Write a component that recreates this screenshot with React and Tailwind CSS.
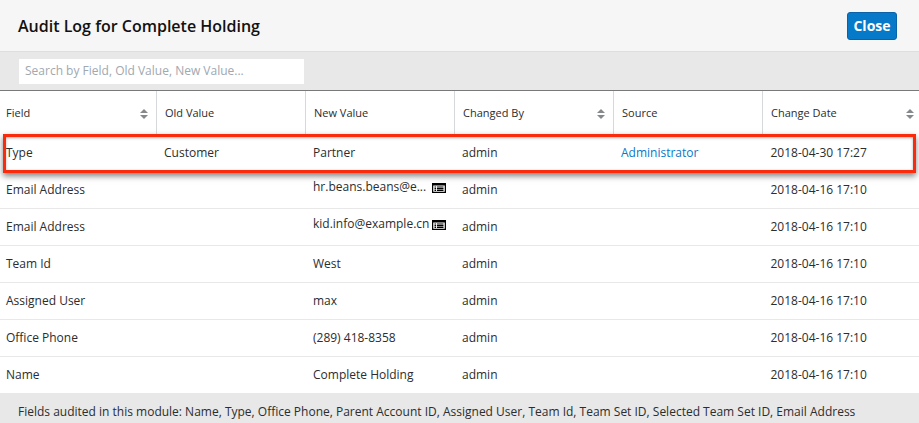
import React from "react";

const columns = [
  { label: "Field", sort: true },
  { label: "Old Value" },
  { label: "New Value" },
  { label: "Changed By", sort: true },
  { label: "Source" },
  { label: "Change Date", sort: true },
];

const rows = [
  ["Type", "Customer", "Partner", "admin", "Administrator", "2018-04-30 17:27"],
  ["Email Address", "", "hr.beans.beans@e...", "admin", "", "2018-04-16 17:10", true],
  ["Email Address", "", "kid.info@example.cn", "admin", "", "2018-04-16 17:10", true],
  ["Team Id", "", "West", "admin", "", "2018-04-16 17:10"],
  ["Assigned User", "", "max", "admin", "", "2018-04-16 17:10"],
  ["Office Phone", "", "(289) 418-8358", "admin", "", "2018-04-16 17:10"],
  ["Name", "", "Complete Holding", "admin", "", "2018-04-16 17:10"],
];

const grid = "grid grid-cols-[157px_149px_149px_159px_149px_156px]";

const SortIcon = () => (
  <svg width="8" height="10" viewBox="0 0 8 10" className="shrink-0 fill-[#85898c]">
    <path d="M4 0 8 4H0Z" />
    <path d="M0 6h8L4 10Z" />
  </svg>
);

const ListIcon = () => (
  <svg width="14" height="10" viewBox="0 0 14 10" className="mt-[1px] shrink-0">
    <rect x="0" y="0" width="14" height="10" fill="#000" />
    <rect x="1.25" y="2.5" width="11.5" height="6.25" fill="#fff" />
    <path d="M2.5 3.4h1.6v1.1H2.5zM5 3.4h6.5v1.1H5zM2.5 5.1h1.6v1.1H2.5zM5 5.1h6.5v1.1H5zM2.5 6.8h1.6v1.1H2.5zM5 6.8h6.5v1.1H5z" fill="#000" />
  </svg>
);

const App = () => {
  return (
    <div className="relative w-[919px] h-[423px] overflow-hidden bg-white text-[12px] text-[#2b2d2e] font-['Open_Sans',sans-serif]">
      <div className="flex h-[52px] items-center justify-between border-b border-[#dedede] bg-[#f6f6f6] pl-[18px] pr-[22px]">
        <h1 className="text-[16px] font-semibold text-[#111]">Audit Log for Complete Holding</h1>
        <button className="h-[28px] w-[50px] rounded-[3px] border border-[#0a62a8] bg-[#0679c8] text-[14px] font-bold text-white">
          Close
        </button>
      </div>

      <div className="flex h-[38px] items-center bg-[#e8e8e8] pl-[19px]">
        <div className="flex h-[25px] w-[285px] items-center bg-white pl-[6px] text-[#a0a8b0]">
          Search by Field, Old Value, New Value...
        </div>
      </div>

      <div className={`${grid} h-[44px] border-t border-[#77797b] text-[11px]`}>
        {columns.map((col, i) => (
          <div
            key={col.label}
            className={`flex items-center justify-between border-[#d5d9dc] pt-[2px] ${i === 0 ? "pl-[6px]" : "pl-[8px]"} ${i < 5 ? "border-r pr-[8px]" : "pr-[5px]"}`}
          >
            <span>{col.label}</span>
            {col.sort && <SortIcon />}
          </div>
        ))}
      </div>

      {rows.map((row, r) => (
        <div
          key={r}
          className={`${grid} ${r === 0 ? "h-[38px]" : r === 6 ? "h-[36px]" : "h-[37px] border-b border-[#e8e8e8]"}`}
        >
          {row.slice(0, 6).map((cell, i) => (
            <div key={i} className={`flex items-center ${i === 0 ? "pl-[6px]" : i === 5 ? "pl-[7.5px]" : "pl-[7px]"}`}>
              {i === 2 && row[6] ? (
                <span className="mb-[6px] flex items-center">
                  <span className="w-[119px]">{cell}</span>
                  <ListIcon />
                </span>
              ) : (
                <span className={i === 4 ? "text-[#0679c8]" : ""}>{cell}</span>
              )}
            </div>
          ))}
        </div>
      ))}

      <div className="h-[30px] bg-[#e8e8e8] pl-[18px] pt-[10px]">
        Fields audited in this module: Name, Type, Office Phone, Parent Account ID, Assigned User, Team Id, Team Set ID, Selected Team Set ID, Email Address
      </div>

      {/* callout drawn over the first row */}
      <div className="absolute left-[3px] top-[134px] h-[39px] w-[913px] border-[3px] border-[#f92b0c] shadow-[0_3px_6px_rgba(0,0,0,0.5),inset_0_1px_3px_rgba(0,0,0,0.3)]" />
    </div>
  );
};

export default App;
